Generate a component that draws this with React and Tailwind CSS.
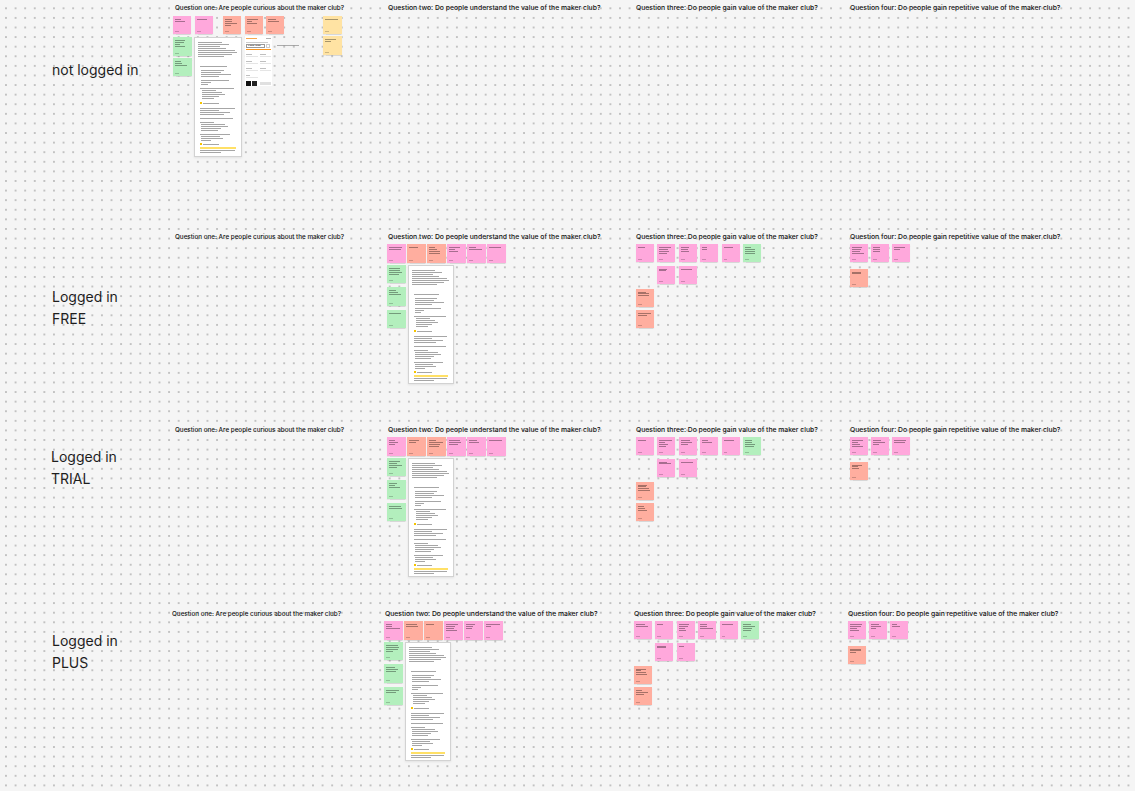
import React from "react";

// sticky note colours (FigJam-ish)
const COLORS = {
  pink: "bg-[#ffa8dc]",
  red: "bg-[#ffae9f]",
  green: "bg-[#b3efbd]",
  yellow: "bg-[#ffe3a3]",
};

function seeded(seed) {
  let s = seed * 7919 + 13;
  return () => {
    s = (s * 9301 + 49297) % 233280;
    return s / 233280;
  };
}

function Note({ color = "pink", className = "size-[18px]", seed = 1 }) {
  const r = seeded(seed);
  const n = 1 + Math.floor(r() * 4);
  const lines = Array.from({ length: n }, () => 35 + Math.round(r() * 55));
  return (
    <div
      className={`${COLORS[color]} ${className} shrink-0 flex flex-col justify-between p-[2px] shadow-[0_0.5px_1px_rgba(0,0,0,0.12)]`}
    >
      <div className="flex flex-col gap-[1.2px] pt-[1px]">
        {lines.map((w, i) => (
          <div key={i} className="h-[0.7px] bg-black/35" style={{ width: `${w}%` }} />
        ))}
      </div>
      <div className="h-[0.6px] w-[28%] bg-black/20" />
    </div>
  );
}

// [indent, width %, gap before, mark]
const DOC_LINES = [
  [0, 60, 0], [0, 78, 0], [0, 55, 0], [0, 70, 0], [0, 92, 0], [0, 97, 0], [0, 84, 0], [0, 66, 0],
  [2, 70, 8],
  [3, 62, 2], [3, 54, 0], [3, 82, 0], [3, 48, 0],
  [3, 75, 2], [3, 26, 0], [3, 18, 0],
  [2, 90, 2], [4, 40, 0], [4, 55, 0], [4, 64, 0], [4, 48, 0], [4, 34, 0],
  [2, 42, 3, "y"],
  [2, 92, 3], [2, 50, 0], [2, 80, 0], [2, 62, 0],
  [2, 88, 2],
  [2, 38, 2], [3, 66, 0], [3, 74, 0], [3, 55, 0], [3, 46, 0],
  [2, 80, 2], [3, 50, 0], [3, 60, 0], [3, 28, 0],
  [2, 42, 2, "y"],
  [2, 94, 2, "h"], [2, 92, 0], [2, 55, 0],
  [2, 10, 3],
];

function DocCard({ className }) {
  return (
    <div
      className={`${className} shrink-0 bg-white border border-[#d2d2d2] shadow-[0_1px_2px_rgba(0,0,0,0.08)] px-[3px] pt-[3px] overflow-hidden flex flex-col`}
    >
      {DOC_LINES.map(([indent, w, gap, mark], i) => (
        <div key={i} className="flex items-center h-[2px] shrink-0" style={{ marginTop: gap, paddingLeft: indent }}>
          {mark === "y" && <div className="w-[2px] h-[2px] bg-[#f5c400] mr-[1px] shrink-0" />}
          <div
            className={mark === "h" ? "h-[1.4px] bg-[#ffe066]" : "h-[0.7px] bg-[#3a3a3a]/45"}
            style={{ width: `${w}%` }}
          />
        </div>
      ))}
    </div>
  );
}

function UiCard({ className }) {
  return (
    <div className={`${className} w-[27px] h-[50px] bg-white shrink-0 px-[1px] pt-[2px] flex flex-col`}>
      <div className="flex justify-between items-center">
        <div className="w-[11px] h-[1px] bg-[#f7a64d]" />
        <div className="w-[5px] h-[1px] bg-black/30" />
      </div>
      <div className="mt-[3px] w-[22px] h-[0.7px] bg-black/20" />
      <div className="mt-[1.5px] flex items-center gap-[1px]">
        <div className="w-[19px] h-[4px] border-[0.5px] border-black/40 flex items-center px-[1px] overflow-hidden">
          <span className="text-[2.6px] font-bold leading-none whitespace-nowrap text-black/80">PEEK ONE</span>
        </div>
        <div className="w-[4px] h-[4px] border-[0.5px] border-black/20" />
      </div>
      <div className="mt-[1px] w-full h-[2px] bg-[#f7941d]" />
      <div className="mt-[3px] grid grid-cols-2 gap-x-[2px] gap-y-[2px]">
        {[0, 1, 2, 3, 4, 5].map((i) => (
          <div key={i} className="h-[5px] border-b-[0.5px] border-black/10 flex items-center">
            <div className="w-[6px] h-[0.6px] bg-black/25" />
          </div>
        ))}
        <div className="h-[5px] border-b-[0.5px] border-black/10 flex items-center">
          <div className="w-[4px] h-[0.6px] bg-black/25" />
        </div>
      </div>
      <div className="mt-[3px] flex items-center gap-[1px]">
        <div className="w-[5px] h-[5px] bg-[#111]" />
        <div className="w-[5px] h-[5px] bg-[#222]" />
        <div className="ml-[2px] flex-1 h-[3px] bg-[#e0e0e0]" />
      </div>
    </div>
  );
}

function Heading({ children, className = "text-[6.8px]" }) {
  return (
    <div className={`${className} h-[8px] leading-[8px] font-medium text-[#111] whitespace-nowrap`}>{children}</div>
  );
}

const Q1 = "Question one: Are people curious about the maker club?";
const Q2 = "Question two: Do people understand the value of the maker club?";
const Q3 = "Question three: Do people gain value of the maker club?";
const Q4 = "Question four: Do people gain repetitive value of the maker club?";

function Q1Board() {
  return (
    <div className="mt-[4px] -ml-[2px] flex flex-col gap-[3px]">
      <div className="flex">
        <Note color="pink" seed={1} />
        <Note color="pink" className="ml-[4px] size-[18px]" seed={2} />
        <Note color="red" className="ml-[10px] size-[18px]" seed={3} />
        <Note color="red" className="ml-[4px] size-[18px]" seed={4} />
        <Note color="red" className="ml-[3px] size-[18px]" seed={5} />
        <Note color="yellow" className="ml-[39px] w-[19px] h-[18px]" seed={6} />
      </div>
      <div className="flex items-start">
        <div className="flex flex-col gap-[2px]">
          <Note color="green" className="w-[19px] h-[19px]" seed={7} />
          <Note color="green" className="w-[19px] h-[18px]" seed={8} />
        </div>
        <DocCard className="ml-[2px] w-[48px] h-[120px]" />
        <UiCard className="ml-[3px] -mt-[1px]" />
        <div className="ml-[5px] mt-[8px] w-[22px] h-[0.7px] bg-black/30" />
        <Note color="yellow" className="ml-[24px] -mt-[1px] w-[19px] h-[19px]" seed={9} />
      </div>
    </div>
  );
}

function Q2Board({ seed }) {
  return (
    <div className="mt-[3px] -ml-px flex flex-col gap-[2px]">
      <div className="flex gap-px">
        {["pink", "red", "red", "pink", "pink", "pink"].map((c, i) => (
          <Note key={i} color={c} className="size-[19px]" seed={seed + i} />
        ))}
      </div>
      <div className="flex gap-[2px]">
        <div className="flex flex-col gap-[4px]">
          <Note color="green" className="w-[19px] h-[18px]" seed={seed + 10} />
          <Note color="green" className="w-[19px] h-[19px]" seed={seed + 11} />
          <Note color="green" className="w-[19px] h-[18px]" seed={seed + 12} />
        </div>
        <DocCard className="w-[46px] h-[119px]" />
      </div>
    </div>
  );
}

function Q3Board({ seed }) {
  return (
    <div className="mt-[3px] flex flex-col">
      <div className="flex gap-[3.4px]">
        {["pink", "pink", "pink", "pink", "pink", "green"].map((c, i) => (
          <Note key={i} color={c} className="size-[18px]" seed={seed + i} />
        ))}
      </div>
      <div className="mt-[3.5px] pl-[21.4px] flex gap-[3.4px]">
        <Note color="pink" className="size-[18px]" seed={seed + 7} />
        <Note color="pink" className="size-[18px]" seed={seed + 8} />
      </div>
      <Note color="red" className="mt-[5px] size-[18px]" seed={seed + 9} />
      <Note color="red" className="mt-[3.5px] size-[18px]" seed={seed + 10} />
    </div>
  );
}

function Q4Board({ seed }) {
  return (
    <div className="mt-[3px] flex flex-col">
      <div className="flex gap-[3px]">
        {[0, 1, 2].map((i) => (
          <Note key={i} color="pink" className="size-[18px]" seed={seed + i} />
        ))}
      </div>
      <Note color="red" className="mt-[6.5px] size-[18px]" seed={seed + 5} />
    </div>
  );
}

function Label({ lines, className }) {
  return (
    <div className={`${className} text-[14px] leading-[22px] text-[#1e1e1e]`}>
      {lines.map((l) => (
        <div key={l}>{l}</div>
      ))}
    </div>
  );
}

export default function App() {
  return (
    <div className="w-[1135px] h-[791px] overflow-hidden font-['Inter',sans-serif] bg-[#f5f5f5] bg-[radial-gradient(circle,#c2c2c2_0.75px,transparent_1.1px)] bg-[length:9.6px_9.6px] bg-[position:1.2px_3.5px] flex flex-col">
      {/* not logged in */}
      <section className="h-[229px] shrink-0 pt-[4px] pl-[52px] flex">
        <div className="w-[123px] shrink-0">
          <Label lines={["not logged in"]} className="mt-[55px]" />
        </div>
        <div className="w-[213px] shrink-0">
          <Heading className="text-[6.3px]">{Q1}</Heading>
          <Q1Board />
        </div>
        <div className="w-[248px] shrink-0">
          <Heading>{Q2}</Heading>
        </div>
        <div className="w-[214px] shrink-0">
          <Heading>{Q3}</Heading>
        </div>
        <div className="flex-1">
          <Heading>{Q4}</Heading>
        </div>
      </section>

      {/* FREE */}
      <section className="h-[193px] shrink-0 pt-[4px] pl-[52px] flex">
        <div className="w-[123px] shrink-0">
          <Label lines={["Logged in", "FREE"]} className="mt-[53px]" />
        </div>
        <div className="w-[213px] shrink-0">
          <Heading className="text-[6.3px]">{Q1}</Heading>
        </div>
        <div className="w-[248px] shrink-0">
          <Heading>{Q2}</Heading>
          <Q2Board seed={20} />
        </div>
        <div className="w-[214px] shrink-0">
          <Heading>{Q3}</Heading>
          <Q3Board seed={40} />
        </div>
        <div className="flex-1">
          <Heading>{Q4}</Heading>
          <Q4Board seed={60} />
        </div>
      </section>

      {/* TRIAL */}
      <section className="h-[184px] shrink-0 pt-[4px] pl-[52px] flex">
        <div className="w-[123px] shrink-0">
          <Label lines={["Logged in", "TRIAL"]} className="mt-[20px] -ml-px" />
        </div>
        <div className="w-[213px] shrink-0">
          <Heading className="text-[6.3px]">{Q1}</Heading>
        </div>
        <div className="w-[248px] shrink-0">
          <Heading>{Q2}</Heading>
          <Q2Board seed={80} />
        </div>
        <div className="w-[214px] shrink-0">
          <Heading>{Q3}</Heading>
          <Q3Board seed={100} />
        </div>
        <div className="flex-1">
          <Heading>{Q4}</Heading>
          <Q4Board seed={120} />
        </div>
      </section>

      {/* PLUS */}
      <section className="flex-1 pt-[4px] pl-[52px] flex">
        <div className="w-[120px] shrink-0">
          <Label lines={["Logged in", "PLUS"]} className="mt-[20px]" />
        </div>
        <div className="w-[213px] shrink-0">
          <Heading className="text-[6.3px]">{Q1}</Heading>
        </div>
        <div className="w-[249px] shrink-0">
          <Heading>{Q2}</Heading>
          <Q2Board seed={140} />
        </div>
        <div className="w-[214px] shrink-0">
          <Heading>{Q3}</Heading>
          <Q3Board seed={160} />
        </div>
        <div className="flex-1">
          <Heading>{Q4}</Heading>
          <Q4Board seed={180} />
        </div>
      </section>
    </div>
  );
}
